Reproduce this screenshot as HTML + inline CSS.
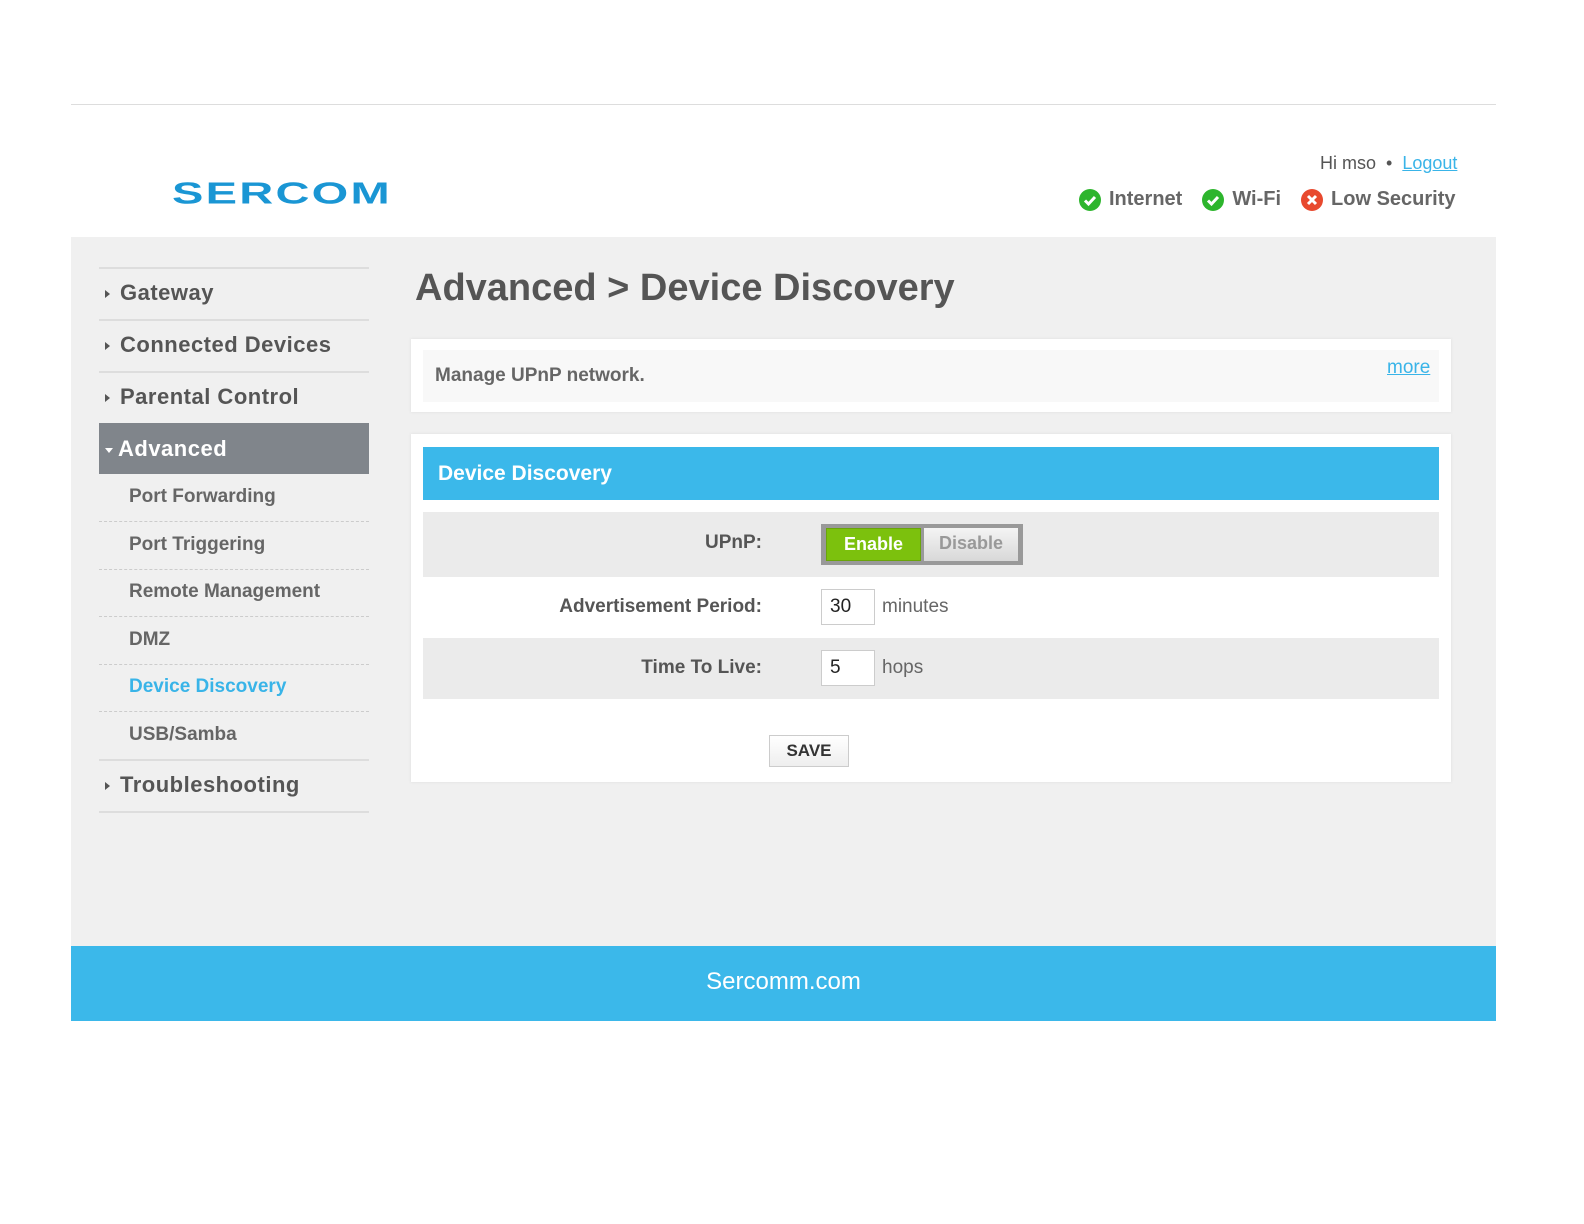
<!DOCTYPE html>
<html><head><meta charset="utf-8"><style>
*{margin:0;padding:0;box-sizing:border-box}
body{width:1584px;height:1224px;background:#fff;position:relative;font-family:"Liberation Sans",Arial,sans-serif;overflow:hidden}
.a{position:absolute}
.nav{position:absolute;left:99px;width:270px;font-size:22px;font-weight:bold;color:#555;letter-spacing:0.5px}
.nav .tri{display:inline-block;width:0;height:0;border-left:5px solid #555;border-top:4px solid transparent;border-bottom:4px solid transparent;margin:0 10px 0 6px;vertical-align:middle}
.sub{position:absolute;left:129px;font-size:19px;color:#666;font-weight:bold;transform:translateY(-50%)}
.hl{position:absolute;left:99px;width:270px;height:0}
.lbl{position:absolute;right:822px;font-size:19px;font-weight:bold;color:#555;transform:translateY(-50%)}
.inp{position:absolute;left:821px;width:54px;height:36px;border:1px solid #ccc;background:#fff;font-size:19px;color:#222;padding:6px 8px}
.unit{position:absolute;left:882px;font-size:19px;color:#666;transform:translateY(-50%)}
</style></head><body>
<div class="a" style="left:71px;top:104px;width:1425px;height:1px;background:#ddd"></div>
<div class="a" style="left:172px;top:176px;font-size:42px;font-weight:bold;color:#1a96d4;letter-spacing:2px;transform:scale(1.12,0.72);transform-origin:top left;line-height:48px">SERCOM</div>
<div class="a" style="left:1320px;top:153px;font-size:18px;color:#555">Hi mso &nbsp;•&nbsp; <span style="color:#39b4e8;text-decoration:underline">Logout</span></div>
<div class="a" style="left:1079px;top:188px;font-size:20px;font-weight:bold;color:#666;white-space:nowrap;display:flex;align-items:center">
<svg width="22" height="22" viewBox="0 0 22 22"><circle cx="11" cy="11" r="11" fill="#2db52d"/><path d="M6 11.5l3.5 3.5 6.5-7" stroke="#fff" stroke-width="3" fill="none"/></svg><span style="margin:0 20px 0 8px">Internet</span>
<svg width="22" height="22" viewBox="0 0 22 22"><circle cx="11" cy="11" r="11" fill="#2db52d"/><path d="M6 11.5l3.5 3.5 6.5-7" stroke="#fff" stroke-width="3" fill="none"/></svg><span style="margin:0 20px 0 8px">Wi-Fi</span>
<svg width="22" height="22" viewBox="0 0 22 22"><circle cx="11" cy="11" r="11" fill="#e8492e"/><path d="M7 7l8 8M15 7l-8 8" stroke="#fff" stroke-width="3"/></svg><span style="margin:0 0 0 8px">Low Security</span></div>

<div class="a" style="left:71px;top:237px;width:1425px;height:709px;background:#f0f0f0"></div>
<div class="a" style="left:71px;top:946px;width:1425px;height:75px;background:#3bb8ea;color:#fff;font-size:24px;text-align:center;line-height:72px">Sercomm.com</div>

<div class="hl" style="top:267px;border-top:2px solid #ddd"></div>
<div class="nav" style="top:280px"><span class="tri"></span>Gateway</div>
<div class="hl" style="top:319px;border-top:2px solid #ddd"></div>
<div class="nav" style="top:332px"><span class="tri"></span>Connected Devices</div>
<div class="hl" style="top:371px;border-top:2px solid #ddd"></div>
<div class="nav" style="top:384px"><span class="tri"></span>Parental Control</div>
<div class="a" style="left:99px;top:423px;width:270px;height:51px;background:#80858b"></div>
<div class="nav" style="top:436px;color:#fff"><span style="display:inline-block;border-top:5px solid #fff;border-left:4px solid transparent;border-right:4px solid transparent;margin:0 5px 0 6px;vertical-align:middle"></span>Advanced</div>
<div class="sub" style="top:497px">Port Forwarding</div>
<div class="hl" style="top:521px;border-top:1px dashed #ccc"></div>
<div class="sub" style="top:545px">Port Triggering</div>
<div class="hl" style="top:569px;border-top:1px dashed #ccc"></div>
<div class="sub" style="top:592px">Remote Management</div>
<div class="hl" style="top:616px;border-top:1px dashed #ccc"></div>
<div class="sub" style="top:640px">DMZ</div>
<div class="hl" style="top:664px;border-top:1px dashed #ccc"></div>
<div class="sub" style="top:687px;color:#39b4e8">Device Discovery</div>
<div class="hl" style="top:711px;border-top:1px dashed #ccc"></div>
<div class="sub" style="top:735px">USB/Samba</div>
<div class="hl" style="top:759px;border-top:2px solid #ddd"></div>
<div class="nav" style="top:772px"><span class="tri"></span>Troubleshooting</div>
<div class="hl" style="top:811px;border-top:2px solid #ddd"></div>

<div class="a" style="left:415px;top:267px;font-size:38px;font-weight:bold;color:#555">Advanced &gt; Device Discovery</div>

<div class="a" style="left:411px;top:339px;width:1040px;height:73px;background:#fff;box-shadow:0 0 3px #ddd"></div>
<div class="a" style="left:423px;top:350px;width:1016px;height:52px;background:#f8f8f8"></div>
<div class="a" style="left:435px;top:365px;font-size:19px;color:#666;font-weight:bold">Manage UPnP network.</div>
<div class="a" style="left:1387px;top:357px;font-size:19px;color:#39b4e8;text-decoration:underline">more</div>

<div class="a" style="left:411px;top:434px;width:1040px;height:348px;background:#fff;box-shadow:0 0 3px #ddd"></div>
<div class="a" style="left:423px;top:447px;width:1016px;height:53px;background:#3bb8ea"></div>
<div class="a" style="left:438px;top:462px;font-size:21px;font-weight:bold;color:#fff">Device Discovery</div>
<div class="a" style="left:423px;top:512px;width:1016px;height:65px;background:#ebebeb"></div>
<div class="a" style="left:423px;top:638px;width:1016px;height:61px;background:#ebebeb"></div>
<div class="lbl" style="top:543px">UPnP:</div>
<div class="a" style="left:821px;top:524px;width:202px;height:41px;background:#999;padding:4px"></div>
<div class="a" style="left:826px;top:528px;width:95px;height:33px;background:#7cc10d;border:1px solid #6aa50a;color:#fff;font-weight:bold;font-size:18px;text-align:center;line-height:31px">Enable</div>
<div class="a" style="left:924px;top:528px;width:94px;height:33px;background:linear-gradient(#f4f4f4,#d8d8d8);color:#999;font-weight:bold;font-size:18px;text-align:center;line-height:31px">Disable</div>
<div class="lbl" style="top:607px">Advertisement Period:</div>
<div class="inp" style="top:589px">30</div><div class="unit" style="top:607px">minutes</div>
<div class="lbl" style="top:668px">Time To Live:</div>
<div class="inp" style="top:650px">5</div><div class="unit" style="top:668px">hops</div>
<div class="a" style="left:769px;top:735px;width:80px;height:32px;border:1px solid #ccc;background:linear-gradient(#fff,#eee);font-size:17px;font-weight:bold;color:#333;text-align:center;line-height:30px">SAVE</div>
</body></html>
